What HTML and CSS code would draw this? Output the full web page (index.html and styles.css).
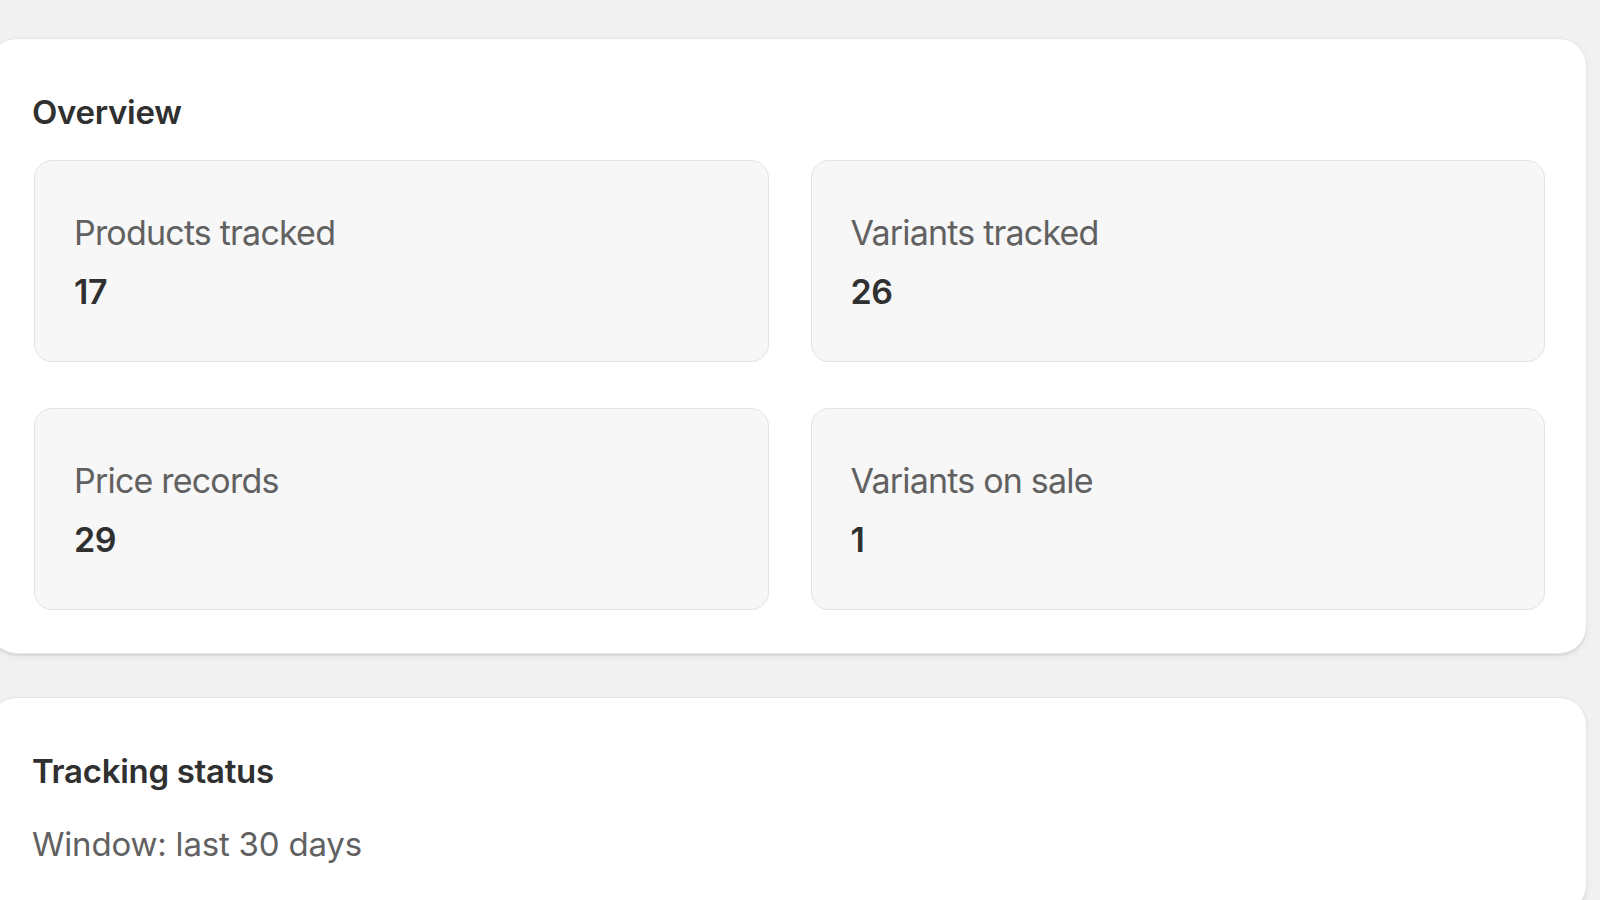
FILE: index.html
```html
<!DOCTYPE html>
<html lang="en">
<head>
  <meta charset="UTF-8" />
  <meta name="viewport" content="width=device-width, initial-scale=1.0"/>
  <title>Price tracker - Dashboard</title>
  <link rel="stylesheet" href="styles.css">
</head>
<body>
  <div class="page">
    <section class="card">
      <h2 class="card-title">Overview</h2>
      <div class="stat-grid">
        <div class="stat">
          <span class="stat-label">Products tracked</span>
          <span class="stat-value">17</span>
        </div>
        <div class="stat">
          <span class="stat-label">Variants tracked</span>
          <span class="stat-value">26</span>
        </div>
        <div class="stat">
          <span class="stat-label">Price records</span>
          <span class="stat-value">29</span>
        </div>
        <div class="stat">
          <span class="stat-label">Variants on sale</span>
          <span class="stat-value">1</span>
        </div>
      </div>
    </section>

    <section class="card">
      <h2 class="card-title">Tracking status</h2>
      <p class="card-text">Window: last 30 days</p>
    </section>
  </div>
</body>
</html>
```

FILE: styles.css
```css
:root {
  --bg: #f1f1f1;
  --surface: #fff;
  --surface-sub: #f7f7f7;
  --border: #e3e3e3;
  --text: #303030;
  --text-sub: #616161;
  --radius: 28px;
  --radius-sm: 18px;
}
* { box-sizing: border-box; margin: 0; padding: 0; }
html { overflow: hidden; }
body {
  background: var(--bg);
  font-family: Inter, 'Noto Sans', Arial, sans-serif;
  color: var(--text);
  height: 100vh;
}
.page {
  margin-left: -11px;
  padding: 38px 13px 0 0;
  display: flex;
  flex-direction: column;
  gap: 43px;
}
.card {
  background: var(--surface);
  border: 1px solid #e6e6e6;
  border-radius: var(--radius);
  padding: 43px 43px 43px 42px;
  display: flex;
  flex-direction: column;
  gap: 18px;
  box-shadow: 0 2px 0 0 rgba(0,0,0,0.06), 0 3px 6px 0 rgba(0,0,0,0.05);
}
.card-title {
  font-size: 33px;
  font-weight: 600;
  line-height: 60px;
  letter-spacing: -0.3px;
  color: var(--text);
}
.card-text {
  font-size: 33px;
  line-height: 50px;
  letter-spacing: -0.2px;
  color: var(--text-sub);
}
.stat-grid {
  display: grid;
  grid-template-columns: 1fr 1fr;
  column-gap: 42px;
  row-gap: 46px;
  margin: 0 -2px 0 2px;
}
.stat {
  background: var(--surface-sub);
  border: 1px solid var(--border);
  border-radius: var(--radius-sm);
  padding: 47px 41px 44px 39px;
  display: flex;
  flex-direction: column;
  gap: 9px;
}
.stat-label {
  font-size: 34px;
  line-height: 50px;
  letter-spacing: -0.8px;
  color: var(--text-sub);
}
.stat-value {
  font-size: 34px;
  line-height: 50px;
  font-weight: 600;
  letter-spacing: -0.4px;
  color: var(--text);
}
```
